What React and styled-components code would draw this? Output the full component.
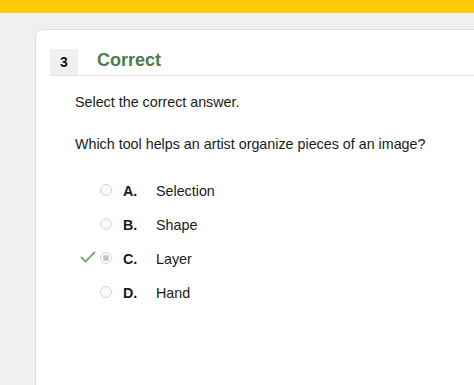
import React from "react";
import styled, { createGlobalStyle } from "styled-components";

const GlobalStyle = createGlobalStyle`
  html, body {
    margin: 0;
    padding: 0;
    background: #f0f0f0;
    font-family: "Liberation Sans", Arial, sans-serif;
    color: #1a1a1a;
  }
`;

const TopBar = styled.div`
  height: 13px;
  background: #fecb05;
`;

const Page = styled.div`
  height: 372px;
  overflow: hidden;
  padding: 16px 0 0 35px;
`;

const Card = styled.div`
  background: #fff;
  border: 1px solid #dedede;
  border-right: none;
  border-radius: 7px 0 0 0;
  height: 400px;
  padding: 19px 0 0 14px;
`;

const Header = styled.div`
  display: flex;
  align-items: center;
  border-bottom: 1px solid #dde3e6;
`;

const Number = styled.div`
  width: 28px;
  height: 26px;
  background: #f0f0f0;
  display: flex;
  align-items: center;
  justify-content: center;
  font-size: 14px;
  font-weight: bold;
  color: #111;
`;

const Status = styled.h2`
  margin: 0 0 4px 19px;
  font-size: 18px;
  font-weight: bold;
  color: ${(p) => (p.$correct ? "#4b7d4b" : "#b03a2e")};
`;

const Body = styled.div`
  padding: 18px 0 0 25px;
  font-size: 14.3px;
`;

const Prompt = styled.p`
  margin: 0;
  line-height: 17px;
`;

const Question = styled.p`
  margin: 25px 0 0;
  line-height: 17px;
`;

const Options = styled.div`
  display: flex;
  flex-direction: column;
  gap: 16px;
  margin-top: 29px;
`;

const Option = styled.div`
  display: flex;
  align-items: center;
  height: 18px;
`;

const Marker = styled.div`
  width: 25px;
  display: flex;
  align-items: center;
  padding-left: 5px;
  box-sizing: border-box;
  margin-top: -4px;
`;

const Radio = styled.span`
  width: 12px;
  height: 12px;
  box-sizing: border-box;
  border-radius: 50%;
  border: 1px solid #d4d4d4;
  background: #fafafa;
  display: flex;
  align-items: center;
  justify-content: center;
  margin-top: -2px;

  &::after {
    content: "";
    width: 6px;
    height: 6px;
    border-radius: 50%;
    background: ${(p) => (p.$checked ? "#c4c4c4" : "transparent")};
  }
`;

const Letter = styled.span`
  font-weight: bold;
  margin-left: 11px;
  width: 33px;
`;

const Label = styled.span``;

const options = [
  { letter: "A.", text: "Selection" },
  { letter: "B.", text: "Shape" },
  { letter: "C.", text: "Layer", checked: true, correct: true },
  { letter: "D.", text: "Hand" },
];

const Check = () => (
  <svg width="16" height="12" viewBox="0 0 16 12">
    <path
      d="M1.5 6.5 L5.5 10.5 L14.5 1.5"
      fill="none"
      stroke="#6cb46c"
      strokeWidth="1.8"
      strokeLinecap="round"
      strokeLinejoin="round"
    />
  </svg>
);

export default function App() {
  return (
    <>
      <GlobalStyle />
      <TopBar />
      <Page>
        <Card>
          <Header>
            <Number>3</Number>
            <Status $correct>Correct</Status>
          </Header>
          <Body>
            <Prompt>Select the correct answer.</Prompt>
            <Question>Which tool helps an artist organize pieces of an image?</Question>
            <Options>
              {options.map((o) => (
                <Option key={o.letter}>
                  <Marker>{o.correct && <Check />}</Marker>
                  <Radio $checked={o.checked} />
                  <Letter>{o.letter}</Letter>
                  <Label>{o.text}</Label>
                </Option>
              ))}
            </Options>
          </Body>
        </Card>
      </Page>
    </>
  );
}
